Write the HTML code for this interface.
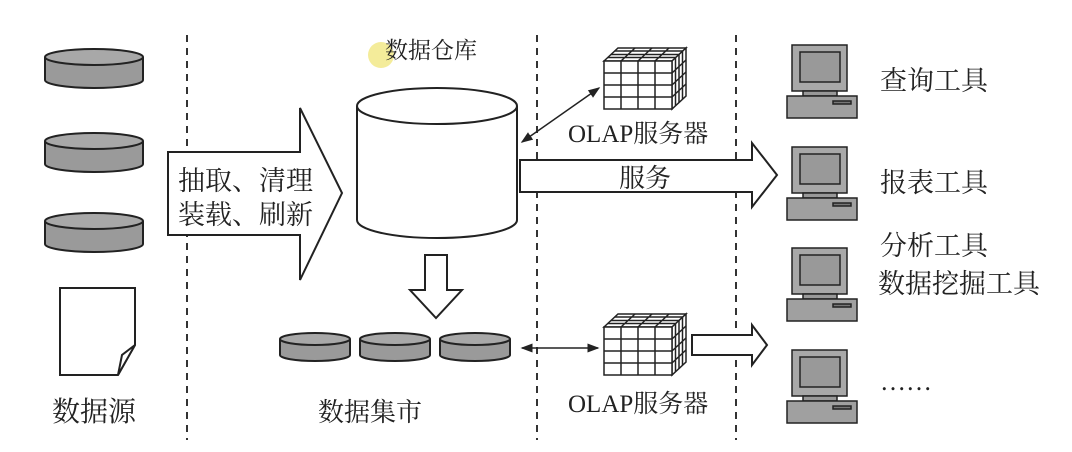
<!DOCTYPE html>
<html><head><meta charset="utf-8"><style>
html,body{margin:0;padding:0;background:#fff;}
svg{display:block}
text{font-family:"Liberation Serif","Noto Serif CJK SC",serif;fill:#222}
</style></head><body>
<svg width="1072" height="452" viewBox="0 0 1072 452" xmlns="http://www.w3.org/2000/svg">
<defs>
<g id="disk"><path d="M0 8 L0 31 A49 8 0 0 0 98 31 L98 8" fill="#9a9a9a" stroke="#222" stroke-width="2"/><ellipse cx="49" cy="8" rx="49" ry="8" fill="#a8a8a8" stroke="#222" stroke-width="2"/></g>
<g id="mdisk"><path d="M0 6 L0 22 A35 6 0 0 0 70 22 L70 6" fill="#9a9a9a" stroke="#222" stroke-width="2"/><ellipse cx="35" cy="6" rx="35" ry="6" fill="#a8a8a8" stroke="#222" stroke-width="2"/></g>
<g id="pc" stroke="#222" stroke-width="1.5">
<rect x="5" y="0" width="55" height="46" fill="#a8a8a8"/>
<rect x="13" y="7" width="40" height="30" fill="#999"/>
<rect x="16" y="46" width="34" height="5" fill="#999"/>
<rect x="0" y="51" width="70" height="22" fill="#a0a0a0"/>
<rect x="46" y="56" width="18" height="3" fill="#777"/>
</g>
<g id="cube" stroke="#222" stroke-width="1.5" fill="#fff">
<path d="M0 13 L14 0 L82 0 L68 13 Z"/>
<path d="M68 13 L82 0 L82 48 L68 61 Z"/>
<rect x="0" y="13" width="68" height="48"/>
<path d="M17 13V61M34 13V61M51 13V61M0 25H68M0 37H68M0 49H68" fill="none"/>
<path d="M71.5 10V58M75 6.5V54.5M78.5 3V51M68 25L82 12M68 37L82 24M68 49L82 36M3.5 9.5H71.5M7 6.5H75M10.5 3H78.5M31 0L17 13M48 0L34 13M65 0L51 13" fill="none"/>
</g>
<marker id="ah" markerWidth="8" markerHeight="8" refX="7" refY="4" orient="auto-start-reverse"><path d="M0 1L8 4L0 7Z" fill="#222"/></marker>
</defs>
<g stroke="#333" stroke-width="2" stroke-dasharray="7,6"><path d="M187 35V440M537 35V440M736 35V440"/></g>
<use href="#disk" x="45" y="49"/><use href="#disk" x="45" y="133"/><use href="#disk" x="45" y="213"/>
<path d="M60 288H135V345L118 375H60Z" fill="#fff" stroke="#222" stroke-width="2"/>
<path d="M135 345L118 375L122 355Z" fill="#fff" stroke="#222" stroke-width="2"/>
<text x="52" y="421" font-size="28">数据源</text>
<path d="M168 152H300V108L342 193L300 280V235H168Z" fill="#fff" stroke="#222" stroke-width="2"/>
<text x="178" y="190" font-size="27">抽取、清理</text>
<text x="178" y="224" font-size="27">装载、刷新</text>
<circle cx="381" cy="55" r="13" fill="#f4ec9a"/>
<text x="385" y="58" font-size="23">数据仓库</text>
<path d="M357 106V220A80 18 0 0 0 517 220V106" fill="#fff" stroke="#222" stroke-width="2"/>
<ellipse cx="437" cy="106" rx="80" ry="18" fill="#fff" stroke="#222" stroke-width="2"/>
<path d="M425 255H447V290H462L436 318L410 290H425Z" fill="#fff" stroke="#222" stroke-width="2"/>
<use href="#mdisk" x="280" y="333"/><use href="#mdisk" x="360" y="333"/><use href="#mdisk" x="440" y="333"/>
<text x="318" y="421" font-size="26">数据集市</text>
<path d="M522 142L599 88" stroke="#222" stroke-width="1.5" marker-start="url(#ah)" marker-end="url(#ah)"/>
<use href="#cube" x="604" y="48"/>
<text x="568" y="142" font-size="25">OLAP服务器</text>
<path d="M520 160H752V143L777 175L752 207V192H520Z" fill="#fff" stroke="#222" stroke-width="2"/>
<text x="619" y="187" font-size="26">服务</text>
<path d="M522 348L598 348" stroke="#222" stroke-width="1.5" marker-start="url(#ah)" marker-end="url(#ah)"/>
<use href="#cube" x="604" y="314"/>
<path d="M692 335H752V325L767 345L752 365V355H692Z" fill="#fff" stroke="#222" stroke-width="2"/>
<text x="568" y="412" font-size="25">OLAP服务器</text>
<use href="#pc" x="787" y="45"/><use href="#pc" x="787" y="147"/><use href="#pc" x="787" y="248"/><use href="#pc" x="787" y="350"/>
<text x="880" y="90" font-size="27">查询工具</text>
<text x="880" y="192" font-size="27">报表工具</text>
<text x="880" y="255" font-size="27">分析工具</text>
<text x="878" y="293" font-size="27">数据挖掘工具</text>
<text x="880" y="390" font-size="26">……</text>
</svg>
</body></html>
